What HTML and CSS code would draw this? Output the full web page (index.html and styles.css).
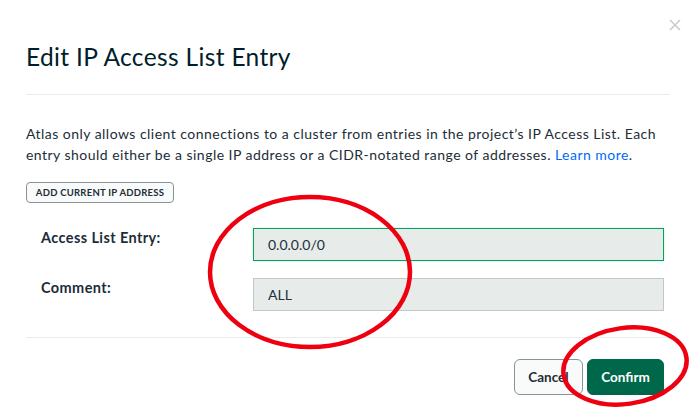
FILE: index.html
```html
<!DOCTYPE html>
<html>
<head>
<meta charset="utf-8">
<link rel="stylesheet" href="styles.css">
</head>
<body>
<div class="modal">
  <button class="close" aria-label="Close">
    <svg width="12" height="12" viewBox="0 0 12 12"><path d="M1 1 L11 11 M11 1 L1 11" stroke="#c7cccb" stroke-width="1.6" fill="none"/></svg>
  </button>
  <header class="head">
    <h1 class="title">Edit IP Access List Entry</h1>
  </header>
  <div class="body">
    <p class="desc">Atlas only allows client connections to a cluster from entries in the project’s IP Access List. Each entry should either be a single IP address or a CIDR-notated range of addresses. <a class="link" href="#">Learn more</a>.</p>
    <button class="add-btn">ADD CURRENT IP ADDRESS</button>
    <div class="form">
      <div class="row">
        <label class="label">Access List Entry:</label>
        <div class="input focused">0.0.0.0/0</div>
      </div>
      <div class="row">
        <label class="label">Comment:</label>
        <div class="input">ALL</div>
      </div>
    </div>
  </div>
  <footer class="foot">
    <button class="btn cancel">Cancel</button>
    <button class="btn confirm">Confirm</button>
  </footer>
  <svg class="marks" width="690" height="415" viewBox="0 0 690 415">
    <ellipse cx="310" cy="272" rx="100" ry="75" fill="none" stroke="#ee0010" stroke-width="4.5"/>
    <ellipse cx="625" cy="366" rx="62" ry="38" transform="rotate(-8 625 366)" fill="none" stroke="#ee0010" stroke-width="4.5"/>
  </svg>
</div>
</body>
</html>
```
FILE: styles.css
```css
* { box-sizing: border-box; }
html, body { margin: 0; padding: 0; background: #fff; }
body { font-family: "Lato", "Inter", sans-serif; color: #001e2b; }

.modal {
  position: relative;
  width: 690px;
  height: 415px;
  overflow: hidden;
  padding: 0 20px 0 26px;
}

.close {
  position: absolute;
  top: 19px;
  left: 669px;
  width: 12px;
  height: 12px;
  padding: 0;
  border: 0;
  background: none;
  display: flex;
}

.head {
  padding-top: 40px;
  height: 95px;
  border-bottom: 1px solid #e8edeb;
}
.title {
  margin: 0;
  font-size: 24.5px;
  line-height: 34px;
  font-weight: 400;
  color: #001e2b;
  letter-spacing: 0.35px;
}

.body {
  padding-top: 28px;
  height: 243px;
  border-bottom: 1px solid #e8edeb;
}
.desc {
  margin: 0;
  font-size: 14px;
  line-height: 21px;
  color: #1c2d38;
  letter-spacing: 0.47px;
  padding-right: 6px;
}
.link { color: #016bf8; text-decoration: none; }

.add-btn {
  margin-top: 17px;
  display: block;
  height: 21px;
  width: 148px;
  padding: 0;
  border: 1px solid #889397;
  border-radius: 4px;
  background: #f9fbfa;
  font-family: "Lato", sans-serif;
  font-size: 9.5px;
  font-weight: 700;
  letter-spacing: 0.25px;
  color: #1c2d38;
}

.form {
  margin-top: 25px;
  display: flex;
  flex-direction: column;
  gap: 17px;
  padding-left: 15px;
  padding-right: 6px;
}
.row {
  display: flex;
  align-items: flex-start;
}
.label {
  width: 212px;
  font-size: 14.5px;
  font-weight: 700;
  line-height: 20px;
  letter-spacing: 0.4px;
  color: #1c2d38;
}
.input {
  flex: 1;
  height: 33px;
  background: #e7ebe9;
  border: 1px solid #c1c7c6;
  padding: 0 14px;
  display: flex;
  align-items: center;
  font-size: 14px;
  color: #21313c;
}
.input.focused {
  border-color: #00a35c;
  box-shadow: 0 0 2px rgba(0,163,92,0.25);
}

.foot {
  display: flex;
  justify-content: flex-end;
  gap: 4px;
  padding-top: 21px;
  padding-right: 6px;
}
.btn {
  height: 36px;
  border-radius: 6px;
  font-family: "Lato", sans-serif;
  font-size: 13.5px;
  font-weight: 700;
  padding: 0;
}
.cancel {
  width: 69px;
  background: #f9fbfa;
  border: 1px solid #889397;
  color: #1c2d38;
}
.confirm {
  width: 77px;
  background: #00684a;
  border: 1px solid #00684a;
  color: #fff;
}

.marks {
  position: absolute;
  left: 0;
  top: 0;
  pointer-events: none;
}
```
